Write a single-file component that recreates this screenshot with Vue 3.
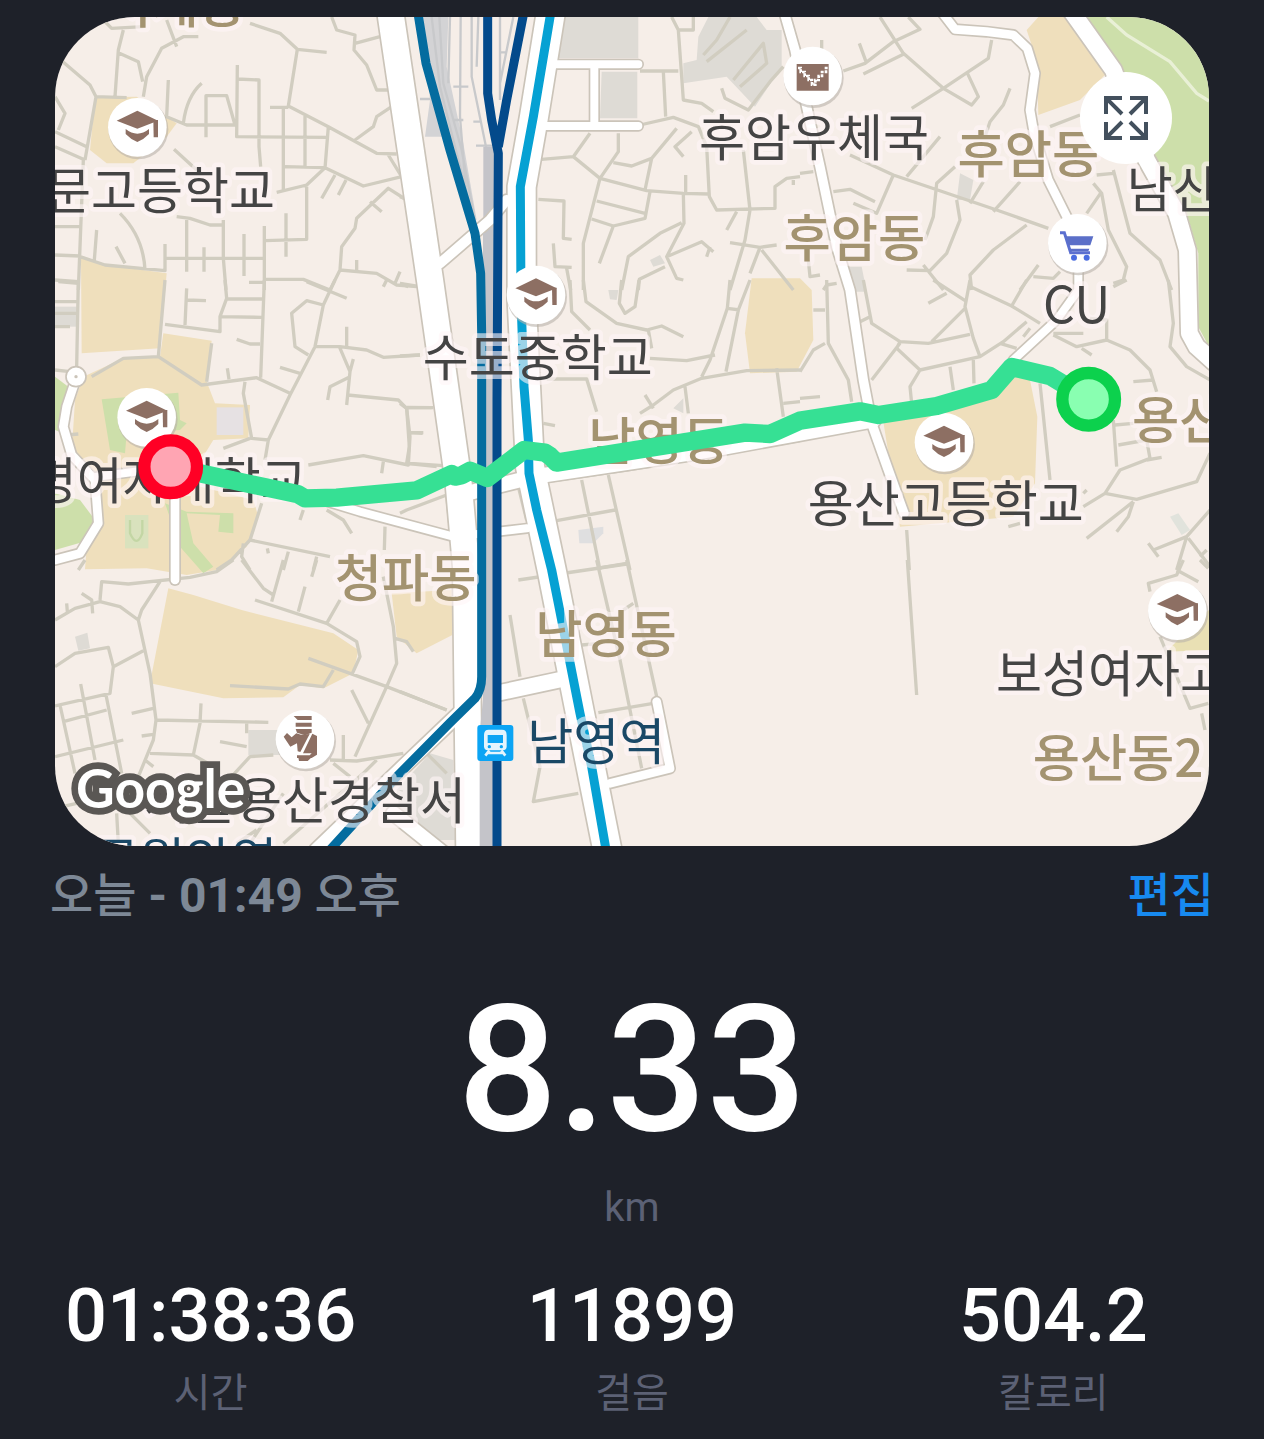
<script setup>
const schools = [
  { x: 412, y: 382 },
  { x: 440, y: 1252 },
  { x: 1608, y: 885 },
  { x: 2832, y: 1327 },
  { x: 3532, y: 1832 },
]

const places = [
  { text: '배문고등학교', x: 825, y: 628, anchor: 'end' },
  { text: '숙명여자대학교', x: 920, y: 1496, anchor: 'end' },
  { text: '수도중학교', x: 1613, y: 1128, anchor: 'middle' },
  { text: '후암우체국', x: 2442, y: 468, anchor: 'middle' },
  { text: 'CU', x: 3230, y: 970, anchor: 'middle' },
  { text: '용산고등학교', x: 2837, y: 1566, anchor: 'middle' },
  { text: '보성여자고등학교', x: 2988, y: 2076, anchor: 'start' },
  { text: '서울용산경찰서', x: 1398, y: 2458, anchor: 'end' },
  { text: '남산', x: 3380, y: 623, anchor: 'start' },
]

const districts = [
  { text: '서계동', x: 738, y: 68, anchor: 'end' },
  { text: '후암동', x: 3085, y: 518, anchor: 'middle' },
  { text: '후암동', x: 2563, y: 770, anchor: 'middle' },
  { text: '남영동', x: 1977, y: 1380, anchor: 'middle' },
  { text: '용산동2가', x: 3396, y: 1318, anchor: 'start' },
  { text: '청파동', x: 1217, y: 1790, anchor: 'middle' },
  { text: '남영동', x: 1818, y: 1958, anchor: 'middle' },
  { text: '용산동2', x: 3098, y: 2330, anchor: 'start' },
]

const stations = [
  { text: '남영역', x: 1582, y: 2280 },
  { text: '공원앞역', x: 280, y: 2636 },
]

const stats = [
  { value: '01:38:36', label: '시간' },
  { value: '11899', label: '걸음' },
  { value: '504.2', label: '칼로리' },
]

// Side streets, grouped by map tile
const tiles = [
  {
    x: 150,
    y: 0,
    d: `M15 165L120 255L138 290L105 480M160 60L185 85L280 80M220 90L205 150L195 290M205 158L265 185L278 245M445 110L400 110L335 145L290 230L280 290
    M350 60L380 140M600 70L690 100L742 148L715 318L835 380L980 460L1040 462M742 148L830 157M660 322L715 322M562 195L560 410L835 412M562 237L627 240L627 440L632 500M355 240L350 350L410 375L555 375L530 287L468 287L468 412
    M455 250Q410 290 400 370M845 51L860 90L915 105L912 150L950 195L980 270L1020 270M915 130L990 110M1025 320L980 350L970 380L915 420M700 320L700 575M765 345L765 500M835 380L825 505M705 500L825 503L770 555L680 577M825 503L940 558L1055 530L1015 465
    M855 525L815 595M888 540L865 585M770 560L770 718L645 722M708 640L708 770M1070 600L1015 565L920 655L915 685L875 740L870 810L980 820L1040 855L1100 860M960 605L995 635M870 810L840 870M920 780L920 810M1050 815L1035 850
    M372 448L440 510M135 290L230 293M138 290L105 480M15 395L110 440M15 440L105 480M15 290L45 340L25 390M100 480L85 870M15 680L95 680M15 765L90 768M25 845L85 850M210 640Q280 710 285 810M140 690L133 780M198 740L225 790
    M90 770L165 795L345 812L345 732M350 775L645 775M410 655L410 815M462 742L462 815M520 660L520 775L528 870M582 702L582 828M643 678L643 870M380 650L420 655L480 675L520 675M645 838L760 838L840 870M597 847L640 847`,
  },
  {
    x: 1200,
    y: 0,
    d: `M720 213L835 213M790 215L797 350M720 375L820 352L895 380L920 440L928 590L950 630L1125 625L1125 560L1160 535L1200 530M815 51L835 90L850 300L905 310L940 335M835 90L880 90L880 51M570 400L520 470L600 535L740 572L850 580L925 582M425 478L520 470
    M655 400L655 455L600 535L550 730L550 870M830 385L755 475L735 570M755 475L695 498L640 488M875 395L825 440L850 470M857 525L857 580M750 575L735 655L640 678L575 657M590 603L735 640M640 678L598 790M415 598L492 603L490 715L515 718
    M850 580L852 670L800 770L830 835L850 840M845 668L780 700L685 770L665 870M715 870L718 838L795 800M800 770L905 725L940 755M930 740L920 770M460 730L465 800L515 802M500 805L512 870M1030 450L1050 630L1035 720L990 870M1010 635L980 690
    M990 728L1080 742L1130 735M1080 742L1050 820M1085 750L1180 870M965 265L975 295L1045 330L1110 245L1150 200M1180 540L1180 555M25 860L0 850M0 590L25 600`,
  },
  {
    x: 2400,
    y: 0,
    d: `M240 51L310 160L430 265L515 315L535 290L500 215M130 213L195 190L280 125L360 88L325 51M190 222L310 163M178 130L198 185M335 325L430 265L565 175L575 120M630 265L610 315L570 365L555 410M65 120L65 150
    M150 465L280 525L590 630L745 685M420 410L320 530M280 525L230 640L160 610M465 500L410 550L400 650L375 720M100 575L150 568L225 605M470 600L480 660L440 760L390 812L320 810M510 610L550 545M660 545L580 635M370 795L430 870
    M680 675L580 750L510 825L515 870M715 795L660 870M905 575L860 640M880 550L905 580L925 690L980 800L970 840L940 850M940 510L990 700L1080 780L1115 870M750 380L840 345M890 525L940 520M60 825L30 830L25 780M0 520L40 515
    M70 870L80 855L110 850M700 830L760 835L780 815`,
  },
  {
    x: 150,
    y: 840,
    d: `M85 0L80 260M345 0L325 230L455 315L620 293L720 340M325 230L220 235L125 290M345 133L510 155L510 110L530 55L525 0M410 25L405 135M410 60L468 62M510 110L635 112M530 57L640 57M643 0L632 293M560 178L600 192L630 192M532 265L537 298M485 190L470 305
    M15 0L85 5M15 270L60 275M855 0L820 75L795 200L720 345L655 480L645 540M820 75L770 62L725 100L735 200L775 225M770 5L890 55M890 140L890 200M795 200L870 200L950 210L1000 232L1110 225M868 200L900 275L890 375M910 237L900 275M690 262L750 280M900 290L840 320L833 360
    M893 345L1045 360L1070 385L1080 470L1075 555L940 527L775 555M1070 382L1145 383M1082 458L1120 458M1000 545L995 580M1080 550L1180 557M585 305L580 340L605 475L655 480M520 505L600 475M635 670L600 780L545 840L500 870M600 780L840 830M760 690L750 720M830 690L880 720L905 760M1005 740L1003 810
    M580 790L575 830L600 870M715 815L700 870M800 830L790 870M652 805L655 820M1010 0L1000 20M50 465L85 462M15 65L80 65M15 140L60 140M15 100L80 100`,
  },
  {
    x: 1200,
    y: 840,
    d: `M550 0L558 65L650 130L740 150L785 138L850 170M745 150L755 205M510 0L515 95L570 150M665 0L658 70L675 100L705 80L717 0M990 0L982 85L930 240L905 290M1050 0L1015 90L978 275M982 85L1020 90M750 235L860 242L945 225M440 297L560 297L590 395
    M720 400L760 375L820 330L905 295L1040 272L1200 270M735 345L760 385M855 320L865 400M1130 265L1150 410M1150 370L1200 365M430 430L465 437M0 228L60 225M0 370L20 385L28 500L20 550L110 560M20 383L100 383M28 458L68 460
    M440 605L490 870M470 722L645 690M545 600L600 870M625 585L690 870M590 865L680 850M220 645L355 620L380 720M0 700L20 690L140 645L150 740M310 600L360 615M440 605L680 570L860 540L1200 482M0 10L60 20`,
  },
  {
    x: 2400,
    y: 840,
    d: `M510 0L495 80L520 175L540 230L360 270L290 205L300 185L385 190L510 163M300 190L215 300M360 270L330 320L335 370M400 0L500 65M440 40L385 70M495 85L395 185M515 22L635 78L720 130M680 0L635 78M540 230L610 185L680 125M600 190L650 205M670 170L690 145
    M520 240L522 310M450 260L460 330M190 0L215 130L300 185M180 125L210 110M80 0L85 190L145 300L155 365M40 90L75 90M75 190L40 210L0 275M0 355L60 350M870 115L920 120L920 180L830 200L760 165M920 180L990 210L1050 270L1070 335M1000 305L1060 300M845 205L875 225
    M760 160L850 160M720 310L750 600M940 420L950 560M945 435L1000 430M955 495L1040 480L1050 535L960 570L915 640L1010 658L1190 605L1230 520M1085 532L1040 540M850 680L915 640M1000 665L860 775M1000 665L985 710L950 755
    M1160 770L1060 810M1045 790L1075 830M1160 770L1230 690M1160 770L1130 870M1165 775L1230 860M1200 830L1220 810M320 750L328 870M1105 0L1120 130L1110 200L1160 260L1230 300M940 20L980 0M850 640L860 630M625 740L660 730`,
  },
  {
    x: 150,
    y: 1680,
    d: `M85 30L105 0M150 120L155 65L235 72L420 52L500 35L550 0M330 65L275 150L265 180L300 340L318 480L310 540L265 650M15 180L75 145L150 125L210 140L265 180M95 100L125 120L128 160M50 130L52 155M15 320L75 280L175 262L190 320L180 400L15 438M190 320L280 272
    M92 372L135 600M30 435L75 640M168 405L215 640M40 485L170 450M15 590L220 540M245 460L310 445M275 528L310 523M318 480L655 487M453 430L450 490L430 585M300 580L430 585L500 625L470 660M590 490L590 520M510 545L590 560M540 655L600 590L670 585M880 525L880 600M840 600L920 603L1060 580
    M615 120L830 190L920 245L930 290L905 345M830 190L870 120M575 0L640 85L670 105M700 0L665 125M800 0L785 50M765 80L745 155M1000 50L1030 200L1040 310L1010 380L915 590M775 295L1010 380L1190 450M905 390L955 490M540 377L715 387L750 372L820 380L850 330
    M1035 235L1070 245L1090 275M200 760L205 850M240 760L300 820M15 745L80 730M620 810L560 850M700 700L600 850M940 640L700 850M980 600L900 680M1130 580L1190 640M850 610L900 650M285 600L310 620`,
  },
  {
    x: 1200,
    y: 1680,
    d: `M355 60L680 12M590 0L660 300L725 625M680 0L770 410M330 165L360 350M370 415L420 620L400 725L535 700M595 458L760 430M0 395L140 450M545 255L600 250M670 150L700 130`,
  },
  {
    x: 2400,
    y: 1680,
    d: `M322 0L350 405M1150 0L1130 45L1045 70L1050 95M1130 30L1195 65M1080 230L1170 445L1225 430M1205 460L1215 510M1200 0L1225 25`,
  },
]

const whiteRoads = [
  { d: 'M2355 45L2385 150L2420 320L2460 500L2510 740L2550 870L2590 1140L2615 1270L2690 1480L2712 1540', w: 28 },
  { d: 'M2828 40L2865 88L2960 95L3040 105L3082 145L3105 220L3090 330L3102 400L3145 540L3215 680', w: 26 },
  { d: 'M3212 30L3340 210L3440 480L3530 640L3562 750L3568 1000L3590 1040L3640 1085', w: 50 },
  { d: 'M3235 800L3235 870L3170 960L3040 1080', w: 24 },
  { d: 'M1650 193L1915 193M1783 200L1783 375M1620 378L1915 378', w: 24 },
  { d: 'M1320 790L1470 660L1520 600', w: 30 },
  { d: 'M230 1130L200 1220L190 1280L215 1365L285 1440L295 1570L240 1660L165 1680', w: 26 },
  { d: 'M525 1450L525 1740', w: 26 },
  { d: 'M290 1430L520 1400L900 1480L1080 1535L1360 1610L1580 1585', w: 24 },
  { d: 'M1490 2080L1700 2035', w: 46 },
  { d: 'M1970 2105L2010 2305L1830 2350', w: 26 },
  { d: 'M1400 1480L1600 1430L2100 1355L2620 1260', w: 44 },
  { d: 'M1420 2100L1200 2310L950 2550', w: 42 },
  { d: 'M1180 2440L1330 2560', w: 42 },
]
</script>

<template>
  <main class="workout">
    <section class="map" aria-label="운동 경로">
      <svg class="map-canvas" viewBox="165 51 3462 2487" preserveAspectRatio="xMidYMid slice">
        <defs>
          <g id="pin-disc">
            <circle cx="3" cy="6" r="90" fill="#b9b2aa" opacity=".6" />
            <circle r="88" fill="#fff" />
          </g>
          <g id="cap" fill="#8d6f63">
            <path d="M0-50L62-20L0 4L-62-20Z" />
            <path d="M48-22H62V30H49Z" />
            <path d="M-35 5Q-18 19 0 19T35 5V20Q20 36 0 44Q-20 36-35 20Z" />
          </g>
        </defs>

        <rect x="165" y="51" width="3462" height="2487" fill="#f6eee8" />

        <g fill="#efdfbc">
          <path d="M285 292L410 290L530 370L500 410L400 490L320 490L270 450Z" />
          <path d="M245 1060L243 775L320 795L500 820L480 1045Z" />
          <path d="M490 1000L635 1022L620 1145L645 1210L750 1215L745 1315L640 1320L560 1450L760 1500L775 1550L740 1640L650 1710L560 1725L440 1705L255 1708L260 1640L300 1590L290 1440L215 1360L225 1200L250 1130L370 1075L480 1070Z" />
          <path d="M505 1765L580 1785L725 1830L1000 1900L1075 1950L1060 2020L980 2060L970 2065L900 2055L850 2092L670 2095L450 2050Z" />
          <path d="M1175 1780L1355 1770L1357 1905L1250 1960L1190 1910Z" />
          <path d="M2255 835L2400 835L2435 870L2440 1020L2390 1115L2250 1120L2235 1000Z" />
          <path d="M2650 1265L2960 1190L3030 1125L3090 1140L3112 1250L3105 1450L3040 1550L2700 1580Z" />
          <path d="M3080 90L3115 51H3200L3320 220L3240 300L3115 345L3110 180Z" />
          <path d="M3600 1850L3627 1830V1950L3500 1955Z" fill="#e9e0b4" />
        </g>

        <g fill="#cddfaa">
          <path d="M3250 51L3350 210L3470 480L3560 640L3595 760L3595 980L3627 1040V51Z" />
          <path d="M165 1130L205 1160L190 1300L165 1290Z" />
          <path d="M165 1480L240 1500L285 1560L270 1620L165 1650Z" />
          <path d="M305 1198L535 1178L540 1260L560 1270L540 1290L380 1300L375 1360L330 1350Z" />
          <path d="M495 1510L560 1535L700 1540L700 1600L655 1595L660 1545L560 1540L580 1630L640 1700L610 1720L540 1640Z" />
          <path d="M375 1545H445V1645H375Z" fill="#d9e2bd" />
        </g>
        <path d="M3320 51L3380 105L3510 185L3590 280L3627 303" class="trail" />
        <path d="M390 1560V1600Q410 1645 427 1600V1560" class="track" />

        <g fill="#dedbd5">
          <path d="M1690 40H1915V175H1675Z" />
          <path d="M1805 215H1912V355H1800Z" />
          <path d="M2125 51H2270L2300 90L2345 90V200L2265 320L2180 230L2050 250V190L2090 180L2095 110Z" />
          <path d="M650 1222H730V1305H650Z" fill="#e6e1e3" />
          <path d="M745 2190H850L860 2265H745Z" />
          <path d="M225 1910L262 1898L270 1945L235 1952Z" />
          <path d="M1735 1590L1810 1580V1600L1780 1630H1738Z" fill="#dfdfe0" />
          <path d="M2880 520L2920 540L2910 600L2870 600Z" />
          <path d="M2545 800H2585L2600 875H2560Z" />
          <path d="M165 920H230V980H165Z" />
          <path d="M1290 2260L1360 2280L1365 2520H1300L1200 2440L1190 2370Z" />
          <path d="M3510 1550L3535 1540L3570 1590L3545 1605Z" fill="#e1e3dc" />
          <path d="M1825 870L1855 870L1850 900L1830 898ZM2020 1225L2050 1195V1240ZM1950 780L1980 765L1995 790L1960 800Z" />
        </g>

        <g class="streets">
          <path v-for="(tile, i) in tiles" :key="i" :d="tile.d" :transform="`translate(${tile.x} ${tile.y})`" />
          <path d="M2110 165L2150 120L2190 51M2120 185L2240 90M2200 240L2290 130L2300 190L2220 260" />
        </g>

        <!-- Rail yard -->
        <g class="yard">
          <path d="M1270 51H1345L1340 200L1390 430L1430 660L1410 640L1340 410H1275L1290 300Z" fill="#d9d8d8" stroke="none" />
          <path d="M1295 51L1320 260L1360 420L1415 640M1318 51L1330 250L1385 450L1425 660M1350 51L1345 250M1382 51L1380 350L1400 600M1415 51V230L1460 450V700M1435 51L1430 200M1500 51V300M1540 51L1500 250M1360 260H1405M1360 360H1390M1428 437H1490M1500 157H1520M1260 297H1290M1420 365H1440" />
        </g>
        <path d="M1468 440V2540" stroke="#c4c4c9" stroke-width="36" fill="none" />

        <!-- Main roads: casings first, then surfaces -->
        <g class="road-line" stroke="#cbc4b9">
          <path v-for="(road, i) in whiteRoads" :key="i" :d="road.d" :stroke-width="road.w + 10" />
          <path d="M1652 40L1602 350L1565 560L1565 900L1590 1400L1655 1710L1740 2140L1822 2550" stroke-width="94" />
          <path d="M1170 30L1290 840L1375 1440L1398 1700L1408 2560" stroke-width="88" />
        </g>
        <g class="road-line" stroke="#fff">
          <path v-for="(road, i) in whiteRoads" :key="i" :d="road.d" :stroke-width="road.w" />
          <path d="M1652 40L1602 350L1565 560L1565 900L1590 1400L1655 1710L1740 2140L1822 2550" stroke-width="84" />
          <path d="M1170 30L1290 840L1375 1440L1398 1700L1408 2560" stroke-width="78" />
        </g>
        <circle cx="228" cy="1130" r="30" fill="#fff" stroke="#cbc4b9" stroke-width="5" />
        <circle cx="228" cy="1130" r="5" fill="#cbc4b9" />
        <path d="M1468 700V2100L1458 2200V2540" stroke="#c4c4c9" stroke-width="38" fill="none" />

        <!-- Rail lines -->
        <g class="rail">
          <path d="M1254 40L1278 190L1350 450L1425 700L1442 820L1445 1000V2030Q1445 2070 1425 2095L1350 2168L1190 2330L985 2555" stroke="#046c9f" />
          <path d="M1463 40V280L1475 360L1495 460L1491 1200V2550M1571 40L1520 300L1495 440" stroke="#034a8b" />
          <path d="M1652 40L1600 350L1561 560L1563 900L1572 1160L1585 1320L1587 1420L1610 1530L1655 1710L1675 1810L1740 2140L1775 2300L1819 2555" stroke="#06a1d3" />
        </g>

        <!-- Points of interest -->
        <g v-for="(p, i) in schools" :key="i" :transform="`translate(${p.x} ${p.y})`">
          <use href="#pin-disc" />
          <use href="#cap" />
        </g>
        <g transform="translate(2438 228)">
          <use href="#pin-disc" />
          <path d="M-48-36H48V44H-48Z" fill="#8d6f63" />
          <path d="M-44-24H-36V-12H-24V0H-12V12H-2V26H8V12H18V0H28V-12H40V-24H48" fill="none" stroke="#fff" stroke-width="8" stroke-dasharray="9 3" />
        </g>
        <g transform="translate(3232 730)">
          <use href="#pin-disc" />
          <path d="M-52-32H-39L-20 28H38" fill="none" stroke="#5b6fd0" stroke-width="9" />
          <path d="M-38-21H48L39 6H-26ZM-23 16H36L33 24H-20Z" fill="#5b6fc8" />
          <circle cx="-10" cy="43" r="9" fill="#4a6ce0" />
          <circle cx="28" cy="43" r="9" fill="#4a6ce0" />
        </g>
        <g transform="translate(915 2218)" fill="#8d6f63">
          <use href="#pin-disc" />
          <path d="M-34-70H20V-58H-22ZM-28-50H20V-38H-28ZM-28-31H20V-20L0-12L-24-20Z" />
          <path d="M-64-8L-54-19L-40-6L-26-18L-12-14L14-16L-14 38L-22 36L-24 12L-44 22ZM22-17L36-10V46L20 56H-24V48H14L20 42H-6Z" />
          <path d="M-20 54H20L8 65H-18Z" />
        </g>
        <g transform="translate(1432 2175)">
          <rect width="108" height="108" rx="9" fill="#0ba4f4" />
          <path d="M34 14H74Q88 14 88 30V64Q88 76 76 76H32Q20 76 20 64V30Q20 14 34 14Z" fill="#e3f4fd" />
          <path d="M31 30H77V54H31Z" fill="#0ba4f4" />
          <circle cx="36" cy="65" r="5" fill="#0ba4f4" />
          <circle cx="72" cy="65" r="5" fill="#0ba4f4" />
          <path d="M36 76L24 92M72 76L84 92M32 84H76" stroke="#e3f4fd" stroke-width="8" fill="none" />
        </g>

        <!-- Labels -->
        <text v-for="(l, i) in districts" :key="`d${i}`" class="label district" :x="l.x" :y="l.y" :text-anchor="l.anchor">{{ l.text }}</text>
        <text v-for="(l, i) in places" :key="`p${i}`" class="label place" :x="l.x" :y="l.y" :text-anchor="l.anchor">{{ l.text }}</text>
        <text v-for="(l, i) in stations" :key="`s${i}`" class="label station" :x="l.x" :y="l.y">{{ l.text }}</text>

        <!-- Recorded route -->
        <path
          class="route"
          d="M512 1400L610 1422L895 1483L915 1495L1010 1493L1250 1471L1355 1422L1365 1430L1385 1426L1410 1412L1462 1434L1572 1350L1635 1358L1650 1368L1670 1388L2235 1298L2310 1302L2400 1262L2580 1234L2635 1245L2810 1218L2975 1170L3035 1101L3150 1128L3266 1198"
        />
        <circle cx="512" cy="1400" r="79" fill="#ffa5b3" stroke="#ff0025" stroke-width="37" />
        <circle cx="3266" cy="1198" r="79" fill="#89ffb1" stroke="#0cd14d" stroke-width="37" />

        <text class="google" x="228" y="2424">Google</text>
      </svg>

      <button class="expand" type="button" aria-label="지도 확대">
        <svg viewBox="0 0 132 132" fill="none" stroke="#43505d" stroke-width="12">
          <path d="M6 54V6H54M8 8L54 54M78 6H126V54M124 8L78 54M6 78V126H54M8 124L54 78M78 126H126V78M124 124L78 78" />
        </svg>
      </button>
    </section>

    <header class="meta">
      <span>오늘 <b>- 01:49</b> 오후</span>
      <button class="edit" type="button">편집</button>
    </header>

    <section class="distance">
      <strong>8.33</strong>
      <span>km</span>
    </section>

    <dl class="stats">
      <div v-for="s in stats" :key="s.label" class="stat">
        <dt>{{ s.label }}</dt>
        <dd>{{ s.value }}</dd>
      </div>
    </dl>
  </main>
</template>

<style>
html {
  background: #1e2129;
}
</style>

<style scoped>
.workout {
  padding-top: 17px;
  color: #fff;
  font-family: Roboto, "Noto Sans CJK KR", sans-serif;
}
.map {
  position: relative;
  margin: 0 55px;
  border-radius: 80px;
  overflow: hidden;
}
.map-canvas {
  display: block;
  width: 100%;
}
.streets path {
  fill: none;
  stroke: #d1cdc0;
  stroke-width: 10;
  stroke-linejoin: round;
}
.trail {
  fill: none;
  stroke: #e9f0d6;
  stroke-width: 10;
}
.track {
  fill: none;
  stroke: #c3d6a4;
  stroke-width: 7;
}
.yard path {
  fill: none;
  stroke: #c8c9cb;
  stroke-width: 7;
}
.yard path[fill] {
  fill: #d3d3d5;
  stroke: none;
}
.road-line path {
  fill: none;
  stroke-linejoin: round;
  stroke-linecap: round;
}
.rail path {
  fill: none;
  stroke-width: 27;
  stroke-linejoin: round;
}
.label {
  font-family: "Noto Sans CJK KR", sans-serif;
  font-size: 150px;
  paint-order: stroke;
  stroke: rgba(255, 245, 247, 0.6);
  stroke-width: 28px;
  stroke-linejoin: round;
}
.place {
  fill: #444;
}
.district {
  fill: #a39370;
  font-size: 154px;
  font-weight: 500;
}
.station {
  fill: #1a4866;
}
.route {
  fill: none;
  stroke: #36e094;
  stroke-width: 55;
  stroke-linejoin: round;
}
.google {
  font-family: Lato, sans-serif;
  font-size: 160px;
  font-weight: 700;
  fill: #fff;
  stroke: #5a5754;
  stroke-width: 40px;
  stroke-linejoin: miter;
  stroke-miterlimit: 2;
  paint-order: stroke;
}
.expand {
  position: absolute;
  top: 55px;
  right: 37px;
  display: grid;
  place-items: center;
  width: 92px;
  height: 92px;
  padding: 0;
  border: 0;
  border-radius: 50%;
  background: #fff;
}
.expand svg {
  width: 44px;
  height: 44px;
}
.meta {
  display: flex;
  justify-content: space-between;
  margin: 20px 50px 0;
  color: #7d8896;
  font-size: 47px;
  font-weight: 500;
  line-height: 60px;
}
.meta b {
  font-size: 48px;
  font-weight: 700;
}
.edit {
  padding: 0;
  border: 0;
  background: none;
  color: #178af0;
  font: inherit;
}
.distance {
  display: flex;
  flex-direction: column;
  align-items: center;
  gap: 26px;
  margin-top: 56px;
}
.distance strong {
  font-size: 176px;
  font-weight: 500;
  line-height: 176px;
}
.distance span {
  color: #5c6175;
  font-size: 40px;
  line-height: 48px;
}
.stats {
  display: grid;
  grid-template-columns: repeat(3, 1fr);
  margin: 40px 0 0;
}
.stat {
  display: flex;
  flex-direction: column-reverse;
  align-items: center;
  gap: 10px;
}
.stat dt {
  color: #5c6175;
  font-size: 40px;
  line-height: 48px;
}
.stat dd {
  margin: 0;
  font-size: 74px;
  font-weight: 500;
  line-height: 88px;
}
</style>
